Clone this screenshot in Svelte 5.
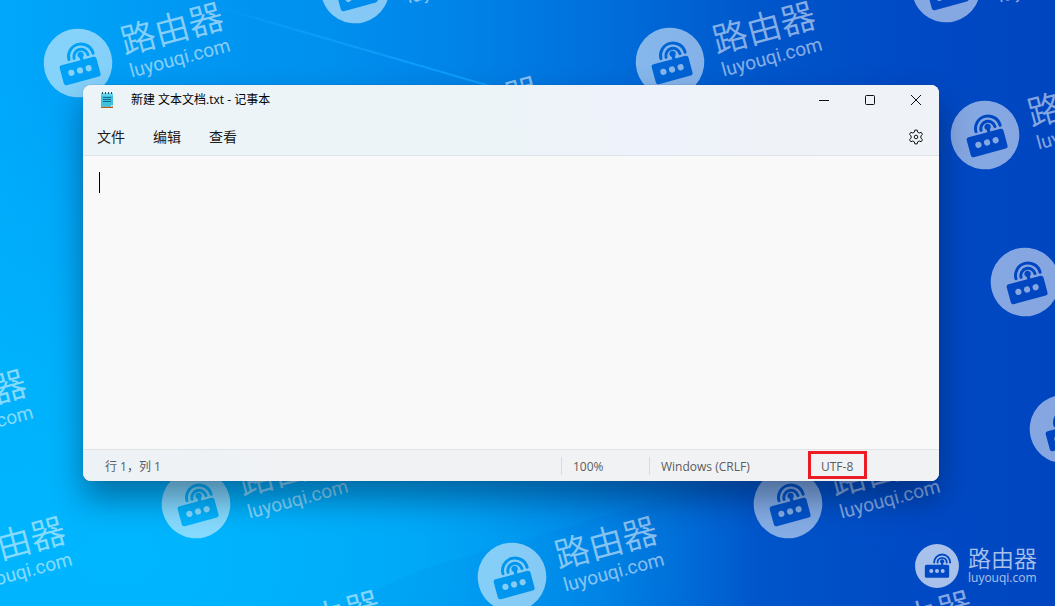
<script>
  const marks = [
    [78, 63], [355, -11], [670, 62], [946, -12],
    [394, 137], [985, 135], [1025, 282], [1064, 429],
    [-119, 430], [-80, 577], [196, 504], [788, 504],
    [512, 577], [235, 651], [827, 651]
  ];
  const menus = ['文件', '编辑', '查看'];
  let text = $state('');
</script>

{#snippet router(shift)}
  <path
    fill-rule="evenodd"
    d="M0-34.3A34.3 34.3 0 1 1 0 34.3A34.3 34.3 0 1 1 0-34.3Z
       M-16.5-2A2.5 2.5 0 0 0-19 .5V16A2.5 2.5 0 0 0-16.5 18.5H16.5A2.5 2.5 0 0 0 19 16V.5A2.5 2.5 0 0 0 16.5-2H{shift + 1.6}V-4.4A3.2 3.2 0 1 0 {shift - 1.6}-4.4V-2Z
       M-12 7.8a3.1 3.1 0 0 1 6.2 0a3.1 3.1 0 0 1-6.2 0Z
       M-3.1 7.8a3.1 3.1 0 0 1 6.2 0a3.1 3.1 0 0 1-6.2 0Z
       M5.8 7.8a3.1 3.1 0 0 1 6.2 0a3.1 3.1 0 0 1-6.2 0Z
       M{shift - 14}-5.5a14 14 0 0 1 28 0a1.5 1.5 0 0 1-3 0a11 11 0 0 0-22 0a1.5 1.5 0 0 1-3 0Z
       M{shift - 8.7}-5.5a8.7 8.7 0 0 1 17.4 0a1.5 1.5 0 0 1-3 0a5.7 5.7 0 0 0-11.4 0a1.5 1.5 0 0 1-3 0Z"
  />
{/snippet}

<main class="desktop">
  <svg class="wallpaper" aria-hidden="true">
    <defs>
      <linearGradient id="ray" x1="0" x2="1">
        <stop offset="0" stop-color="#12a4ff" stop-opacity="0" />
        <stop offset="0.4" stop-color="#12a4ff" stop-opacity="0.6" />
        <stop offset="1" stop-color="#12a4ff" stop-opacity="0.8" />
      </linearGradient>
    </defs>
    <path d="M200 2L490 86" stroke="url(#ray)" stroke-width="2" />
    <path d="M420 570L720 482L1000 606H340Z" fill="#0048c8" opacity="0.05" />
    {#each marks as [x, y]}
      <g class="mark" transform="translate({x} {y}) rotate(-15)">
        {@render router(4.6)}
        <text class="brand" x="47" y="4">路由器</text>
        <text class="site" x="48" y="28">luyouqi.com</text>
      </g>
    {/each}
  </svg>

  <section class="window">
    <header>
      <div class="titlebar">
        <svg class="app-icon" width="14" height="18" viewBox="0 0 14 18" aria-hidden="true">
          <path d="M1 15.5H13V17H1Z" fill="#b75a16" />
          <path d="M1 2.5H13V14L11.5 15.8H1Z" fill="#3fc0dc" />
          <path d="M1 2.5H13V5H1Z" fill="#5fd3ea" />
          <path d="M11 15.8V14H13Z" fill="#d8f1f8" />
          <path d="M2.5 1V3M5.5 1V3M8.5 1V3M11.5 1V3" stroke="#17536b" />
          <path d="M3 6.5H11M3 8.5H11M3 10.5H11" stroke="#0f6f8c" />
        </svg>
        <h1>新建 文本文档.txt - 记事本</h1>
        <button aria-label="最小化"><svg width="12" height="12"><path d="M1 6.5H11" /></svg></button>
        <button aria-label="最大化"><svg width="12" height="12"><rect x="1.5" y="1.5" width="9" height="9" rx="1" /></svg></button>
        <button aria-label="关闭"><svg width="12" height="12"><path d="M1 1L11 11M11 1L1 11" /></svg></button>
      </div>
      <nav>
        {#each menus as m}<button>{m}</button>{/each}
        <button class="settings" aria-label="设置">
          <svg width="16" height="16" viewBox="0 0 16 16">
            <path d="M6.4 3.1L6.8 1.1H9.2L9.6 3.1L11.2 4L13.2 3.3L14.5 5.4L12.9 6.8V9.2L14.5 10.6L13.2 12.7L11.2 12L9.6 12.9L9.2 14.9H6.8L6.4 12.9L4.8 12L2.8 12.7L1.5 10.6L3.1 9.2V6.8L1.5 5.4L2.8 3.3L4.8 4Z" stroke-linejoin="round" />
            <circle cx="8" cy="8" r="1.8" />
          </svg>
        </button>
      </nav>
    </header>

    <div class="editor">
      <textarea aria-label="文本编辑器" bind:value={text} spellcheck="false"></textarea>
      <span class="caret"></span>
    </div>

    <footer>
      <span class="position">行 1，列 1</span>
      <span class="cell">100%</span>
      <span class="cell">Windows (CRLF)</span>
      <span class="cell marked">UTF-8</span>
    </footer>
  </section>

  <svg class="logo" width="124" height="46" aria-hidden="true">
    <g transform="translate(23 23) scale(0.64)">{@render router(8)}</g>
    <text class="logo-brand" x="54" y="24">路由器</text>
    <text class="logo-site" x="54" y="39">luyouqi.com</text>
  </svg>
</main>

<style>
  :global(body) {
    margin: 0;
  }

  .desktop {
    position: relative;
    box-sizing: border-box;
    height: 100vh;
    min-height: 320px;
    padding: 85px 116px 125px 83px;
    display: flex;
    overflow: hidden;
    font-family: "Open Sans", "Noto Sans CJK SC", sans-serif;
    background:
      radial-gradient(ellipse 60% 80% at 12% 92%, rgba(0, 184, 255, 0.95) 0%, rgba(0, 180, 252, 0.75) 45%, rgba(0, 170, 248, 0) 100%),
      linear-gradient(90deg, #00a8fb 0%, #0099f3 16%, #0090ee 31%, #0084e8 43%, #006fdc 57%, #0056cb 72%, #004ac5 86%, #0045c0 100%);
  }

  .wallpaper {
    position: absolute;
    inset: 0;
    width: 100%;
    height: 100%;
  }

  .mark {
    fill: #fff;
    opacity: 0.52;
  }

  .brand {
    font: 350 35px "Noto Sans CJK SC", sans-serif;
  }

  .site {
    font: 400 19px Roboto, sans-serif;
  }

  .window {
    position: relative;
    flex: 1;
    min-width: 0;
    display: flex;
    flex-direction: column;
    border-radius: 8px;
    overflow: hidden;
    background: #f9f9f9;
    box-shadow:
      0 0 1px 0 rgba(60, 70, 80, 0.8),
      0 18px 32px rgba(0, 20, 50, 0.42);
  }

  header {
    border-bottom: 1px solid #dbe4ea;
    background: linear-gradient(80deg, #ecf4f7 0%, #ecf4f7 46%, #eef2fa 62%, #eef2fa 68%, #eff3f7 84%);
  }

  .titlebar {
    height: 30px;
    display: flex;
    align-items: center;
    padding-left: 17px;
  }

  h1 {
    flex: 1;
    margin: 0 0 0 17px;
    font-size: 12px;
    font-weight: 400;
    line-height: 18px;
    white-space: nowrap;
    color: #000;
  }

  button {
    margin: 0;
    padding: 0;
    border: 0;
    background: none;
    font: inherit;
    color: #1b1b1b;
  }

  button svg {
    display: block;
    margin: auto;
    fill: none;
    stroke: #111;
  }

  .titlebar button {
    width: 46px;
    height: 30px;
  }

  nav {
    box-sizing: border-box;
    height: 40px;
    display: flex;
    align-items: center;
    gap: 28px;
    padding: 3px 15px 0 14px;
  }

  nav button {
    font-size: 14px;
    line-height: 20px;
  }

  .settings {
    margin-left: auto;
  }

  .editor {
    flex: 1;
    min-height: 0;
    display: grid;
  }

  textarea,
  .caret {
    grid-area: 1 / 1;
  }

  textarea {
    padding: 16px;
    border: 0;
    outline: 0;
    resize: none;
    background: #f9f9f9;
    font: 16px "Open Sans", "Noto Sans CJK SC", sans-serif;
    caret-color: transparent;
  }

  .caret {
    width: 1px;
    height: 21px;
    margin: 16px;
    background: #000;
  }

  footer {
    height: 31px;
    display: grid;
    grid-template-columns: 1fr 88px 159px 131px;
    align-items: center;
    border-top: 1px solid #e2e4e6;
    background: linear-gradient(90deg, #edf2f6, #f1f2f4 30%);
    font-size: 12px;
    line-height: 16px;
    color: #5a5c5e;
  }

  .position {
    padding: 2px 0 0 22px;
  }

  .cell {
    padding: 2px 0 0 11px;
    border-left: 1px solid #d9dbdd;
  }

  .marked {
    position: relative;
    padding-left: 12px;
  }

  .marked::after {
    content: "";
    position: absolute;
    box-sizing: border-box;
    left: -1px;
    top: -6px;
    width: 59px;
    height: 28px;
    border: 3px solid #ed1c24;
  }

  .logo {
    position: absolute;
    right: 17px;
    bottom: 17px;
    fill: #fff;
    opacity: 0.66;
  }

  .logo-brand {
    font: 350 23px "Noto Sans CJK SC", sans-serif;
  }

  .logo-site {
    font: 400 12px "Open Sans", sans-serif;
  }
</style>
